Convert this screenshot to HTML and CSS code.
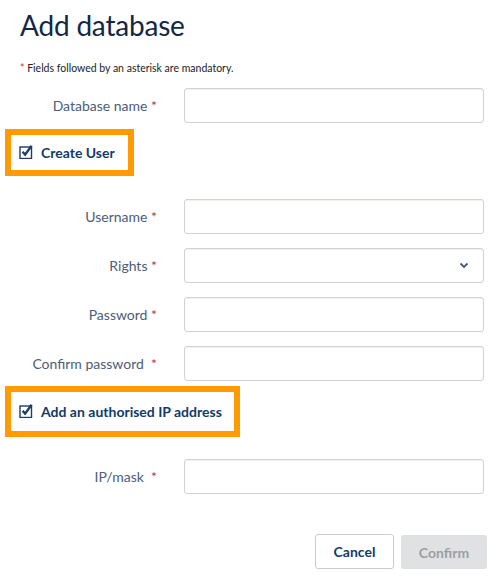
FILE: index.html
```html
<!DOCTYPE html>
<html>
<head>
<meta charset="utf-8">
<link rel="stylesheet" href="styles.css">
</head>
<body>
<main class="page">
  <h1 class="title">Add database</h1>
  <p class="note"><span class="req">*</span> Fields followed by an asterisk are mandatory.</p>

  <div class="row row-first">
    <label class="label">Database name <span class="req">*</span></label>
    <div class="input"></div>
  </div>

  <div class="highlight hl-user">
    <label class="check">
      <svg class="box" width="15" height="15" viewBox="0 0 15 15"><rect x="1" y="3" width="11.5" height="11.5" fill="none" stroke="#1b3d66" stroke-width="1.4"/><path d="M3.6 7.8 L6.1 10.6 L12.6 1.8" fill="none" stroke="#1b3d66" stroke-width="2.3" stroke-linejoin="miter"/></svg>
      <span>Create User</span>
    </label>
  </div>

  <div class="group">
    <div class="row">
      <label class="label">Username <span class="req">*</span></label>
      <div class="input"></div>
    </div>
    <div class="row">
      <label class="label">Rights <span class="req">*</span></label>
      <div class="input select">
        <svg width="10" height="7" viewBox="0 0 10 7"><path d="M1.5 1.5 L5 5 L8.5 1.5" fill="none" stroke="#44587a" stroke-width="1.8"/></svg>
      </div>
    </div>
    <div class="row">
      <label class="label">Password <span class="req">*</span></label>
      <div class="input"></div>
    </div>
    <div class="row">
      <label class="label">Confirm password &nbsp;<span class="req">*</span></label>
      <div class="input"></div>
    </div>
  </div>

  <div class="highlight hl-ip">
    <label class="check">
      <svg class="box" width="15" height="15" viewBox="0 0 15 15"><rect x="1" y="3" width="11.5" height="11.5" fill="none" stroke="#1b3d66" stroke-width="1.4"/><path d="M3.6 7.8 L6.1 10.6 L12.6 1.8" fill="none" stroke="#1b3d66" stroke-width="2.3" stroke-linejoin="miter"/></svg>
      <span>Add an authorised IP address</span>
    </label>
  </div>

  <div class="row row-ip">
    <label class="label">IP/mask &nbsp;<span class="req">*</span></label>
    <div class="input"></div>
  </div>

  <div class="actions">
    <button class="btn btn-cancel">Cancel</button>
    <button class="btn btn-confirm">Confirm</button>
  </div>
</main>
</body>
</html>
```

FILE: styles.css
```css
* { box-sizing: border-box; }
html, body { margin: 0; padding: 0; background: #fff; }
body {
  font-family: "Source Sans Pro", Lato, "Liberation Sans", sans-serif;
  color: #4d5d78;
}
.page {
  width: 500px;
  padding: 0 16px 0 20px;
}
.title {
  margin: 0;
  padding-top: 6px;
  font-size: 28px;
  line-height: 38px;
  font-weight: 400;
  color: #132745;
  letter-spacing: -0.2px;
}
.note {
  margin: 17px 0 0;
  font-size: 10.5px;
  line-height: 14px;
  color: #222;
}
.req { color: #c0392b; }
.row {
  display: grid;
  grid-template-columns: 137px 300px;
  column-gap: 27px;
  align-items: center;
  height: 35px;
}
.row-first { margin-top: 13px; }
.label {
  text-align: right;
  font-size: 14px;
  color: #4d5d78;
  white-space: nowrap;
}
.input {
  height: 35px;
  border: 1px solid #cfd3d8;
  border-radius: 3px;
  box-shadow: inset 0 1px 1px rgba(0,0,0,0.06);
  background: #fff;
}
.select {
  display: flex;
  align-items: center;
  justify-content: flex-end;
  padding-right: 14px;
}
.highlight {
  display: flex;
  align-items: center;
  margin-left: -15px;
  border: 6px solid #ff9a00;
  background: #fff;
  padding-left: 8px;
}
.hl-user { width: 129px; height: 47px; margin-top: 6px; }
.hl-ip { width: 235px; height: 51px; margin-top: 5px; }
.check {
  display: flex;
  align-items: center;
  gap: 7px;
  font-size: 14px;
  font-weight: 700;
  color: #123a69;
}
.check .box { flex: none; margin-top: -3px; }
.group {
  display: flex;
  flex-direction: column;
  gap: 14px;
  margin-top: 23px;
}
.row-ip { margin-top: 22px; }
.actions {
  display: flex;
  justify-content: flex-end;
  align-items: flex-start;
  gap: 7px;
  margin-top: 40px;
  margin-right: -3px;
}
.btn {
  font-family: inherit;
  font-size: 14px;
  font-weight: 700;
  border-radius: 3px;
  cursor: pointer;
}
.btn-cancel {
  width: 79px;
  height: 35px;
  background: #fff;
  border: 1px solid #c8ccd1;
  color: #123a69;
}
.btn-confirm {
  width: 86px;
  height: 34px;
  margin-top: 1px;
  background: #e0e1e3;
  border: none;
  color: #9b9ea3;
}
```
